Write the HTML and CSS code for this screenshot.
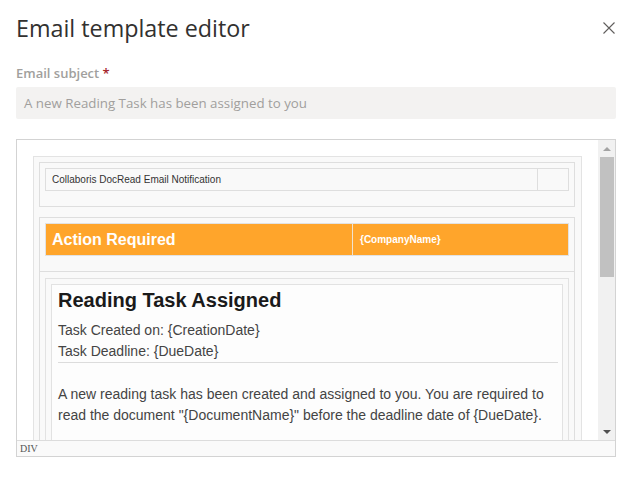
FILE: index.html
```html
<!DOCTYPE html>
<html>
<head>
<meta charset="utf-8">
<link rel="stylesheet" href="styles.css">
</head>
<body>
<div class="head">
  <h1 class="title">Email template editor</h1>
  <button class="close" aria-label="Close">
    <svg width="12" height="12" viewBox="0 0 12 12"><path d="M0.5 0.5 L11.5 11.5 M11.5 0.5 L0.5 11.5" stroke="#605e5c" stroke-width="1.1" fill="none"/></svg>
  </button>
</div>
<label class="label">Email subject <span class="req">*</span></label>
<div class="input">A new Reading Task has been assigned to you</div>
<div class="frame">
  <div class="viewrow">
    <div class="content">
      <div class="email">
        <div class="hbox">
          <div class="htable">
            <div class="hcell">Collaboris DocRead Email Notification</div>
            <div class="hcell2"></div>
          </div>
        </div>
        <div class="abox">
          <div class="otable">
            <div class="ocell">Action Required</div>
            <div class="ocell2">{CompanyName}</div>
          </div>
        </div>
        <div class="bbox">
          <div class="ibox">
            <div class="card">
              <h2 class="ctitle">Reading Task Assigned</h2>
              <div class="meta">Task Created on: {CreationDate}<br>Task Deadline: {DueDate}</div>
              <p class="para">A new reading task has been created and assigned to you. You are required to<br>read the document "{DocumentName}" before the deadline date of {DueDate}.</p>
            </div>
          </div>
        </div>
      </div>
    </div>
    <div class="scrollbar">
      <div class="arrow up"></div>
      <div class="thumb"></div>
      <div class="track"></div>
      <div class="arrow down"></div>
    </div>
  </div>
  <div class="status">DIV</div>
</div>
</body>
</html>
```
FILE: styles.css
```css
* { box-sizing: border-box; }
html, body { margin: 0; background: #fff; }
body {
  padding: 0 18px 0 16px;
  width: 634px;
  height: 480px;
  overflow: hidden;
  font-family: "Open Sans", sans-serif;
}
.head {
  display: flex;
  justify-content: space-between;
  align-items: center;
  height: 56px;
}
.title {
  margin: 0;
  font-size: 23.3px;
  font-weight: 500;
  line-height: 32px;
  color: #323130;
}
.close {
  border: 0;
  background: none;
  padding: 0;
  width: 12px;
  height: 12px;
  display: flex;
  margin-right: 1px;
  margin-top: -1px;
}
.label {
  display: block;
  margin-top: 7px;
  font-size: 13px;
  font-weight: 600;
  line-height: 20px;
  color: #a19f9d;
}
.req { color: #a4262c; }
.input {
  margin-top: 4px;
  height: 32px;
  line-height: 32px;
  padding: 0 8px;
  background: #f3f2f1;
  border-radius: 2px;
  font-size: 13.3px;
  color: #a19f9d;
}
.frame {
  margin-top: 20px;
  border: 1px solid #d3d3d3;
  height: 318px;
  display: flex;
  flex-direction: column;
}
.viewrow {
  display: flex;
  height: 300px;
}
.content {
  flex: 1;
  overflow: hidden;
  padding: 16px 16px 0 16px;
  background: #fff;
  font-family: "Liberation Sans", Arial, sans-serif;
}
.email {
  border: 1px solid #e3e3e3;
  background: #f9f9f9;
  padding: 5px 6px 0 5px;
}
.hbox {
  border: 1px solid #dedede;
  padding: 5px 5px 15px 5px;
}
.htable {
  display: flex;
  height: 23px;
  border: 1px solid #dedede;
}
.hcell {
  flex: 1;
  padding-left: 6px;
  font-size: 10px;
  line-height: 21px;
  color: #333;
}
.hcell2 {
  width: 31px;
  border-left: 1px solid #dedede;
}
.abox {
  margin-top: 10px;
  border: 1px solid #dedede;
  padding: 5px 5px 15px 5px;
}
.otable {
  display: flex;
  height: 33px;
  border: 1px solid #e2e2e2;
  background: #ffa52b;
  color: #fff;
  font-weight: 700;
}
.ocell {
  width: 307px;
  border-right: 1px solid #f1e3cf;
  padding-left: 6px;
  font-size: 16px;
  line-height: 31px;
}
.ocell2 {
  flex: 1;
  padding-left: 7px;
  font-size: 10px;
  line-height: 31px;
}
.bbox {
  border: 1px solid #dedede;
  border-top: 0;
  padding: 6px 5px 0 5px;
  height: 400px;
}
.ibox {
  border: 1px solid #e2e2e2;
  padding: 5px 5px 0 5px;
  height: 400px;
}
.card {
  border: 1px solid #e2e2e2;
  background: #fdfdfd;
  padding: 3px 4px 0 6px;
  height: 400px;
}
.ctitle {
  margin: 0;
  font-size: 20px;
  line-height: 24px;
  font-weight: 700;
  color: #1a1a1a;
}
.meta {
  margin-top: 8px;
  font-size: 14px;
  line-height: 21px;
  color: #444;
  border-bottom: 1px solid #dcdcdc;
}
.para {
  margin: 21px 0 0 0;
  font-size: 14px;
  line-height: 21px;
  color: #444;
}
.scrollbar {
  width: 17px;
  background: #f1f1f1;
  display: flex;
  flex-direction: column;
}
.arrow {
  height: 17px;
  display: flex;
  align-items: center;
  justify-content: center;
}
.arrow::before {
  content: "";
  width: 0;
  height: 0;
  border-left: 4px solid transparent;
  border-right: 4px solid transparent;
}
.up::before { border-bottom: 4px solid #a3a3a3; }
.down::before { border-top: 4px solid #505050; }
.thumb {
  height: 120px;
  margin: 0 1px 0 2px;
  background: #c1c1c1;
}
.track { flex: 1; }
.status {
  height: 16px;
  border-top: 1px solid #dcdcdc;
  background: #fafafa;
  padding-left: 3px;
  font-family: "Liberation Serif", serif;
  font-size: 10px;
  line-height: 15px;
  color: #555;
}
```
